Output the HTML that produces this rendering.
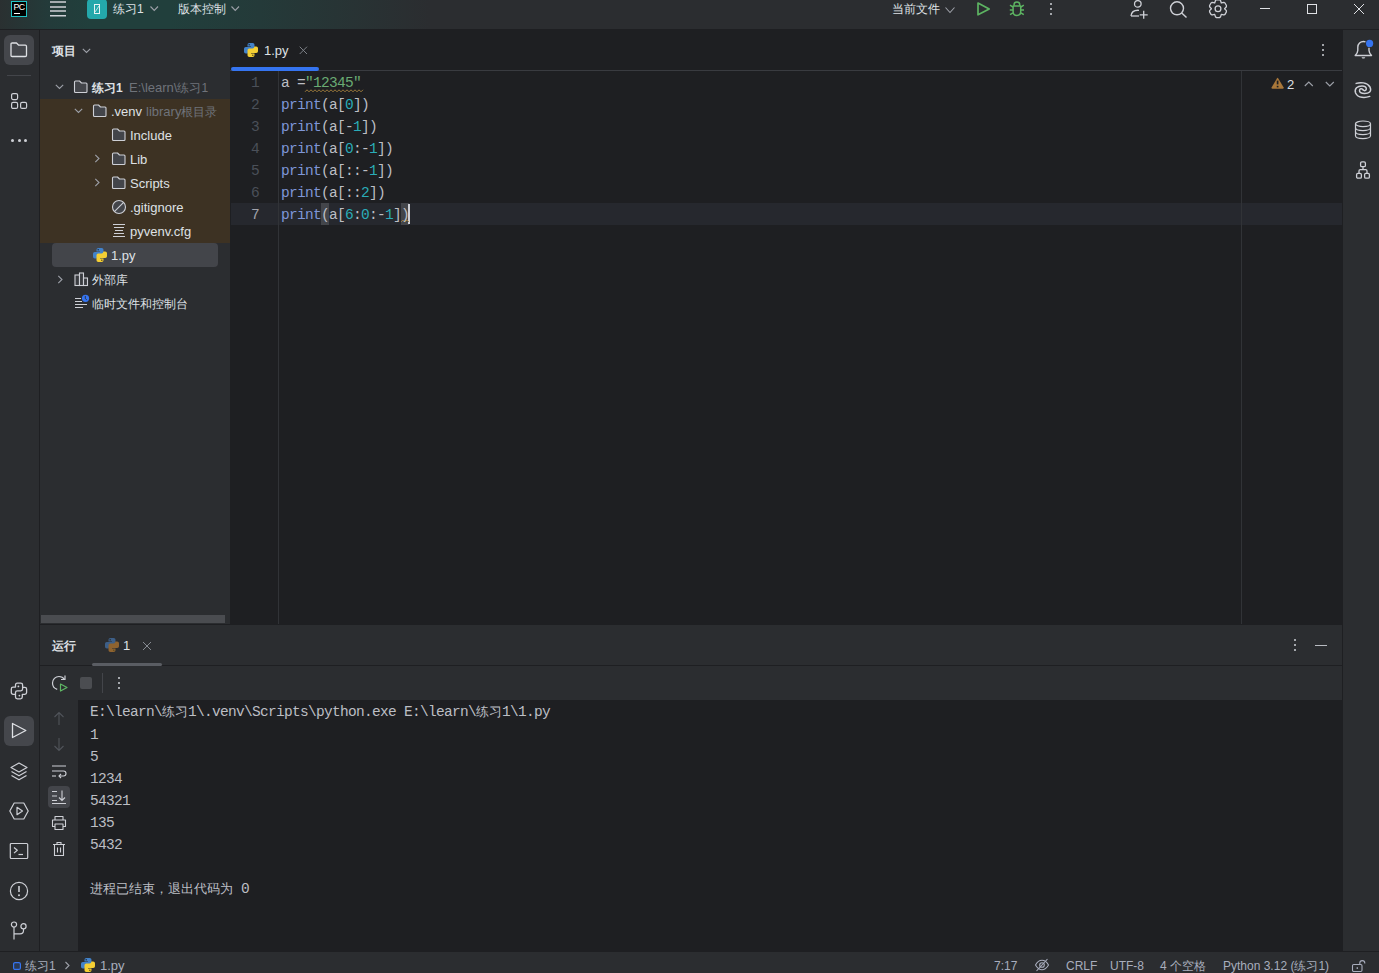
<!DOCTYPE html>
<html><head><meta charset="utf-8">
<style>
*{margin:0;padding:0;box-sizing:border-box}
html,body{width:1379px;height:973px;overflow:hidden;background:#2B2D30;font-family:"Liberation Sans",sans-serif;font-size:13px;color:#DFE1E5}
.a{position:absolute}
.t{position:absolute;white-space:nowrap;line-height:18px}
.m{font-family:"Liberation Mono",monospace;font-size:14.5px;letter-spacing:-0.7px;white-space:pre;line-height:22px}
svg{position:absolute;overflow:visible}
#title{left:0;top:0;width:1379px;height:29px;background:linear-gradient(to right,#2A3031 0px,#233B3A 50px,#213F3C 90px,#213F3C 170px,#243A39 260px,#2B2D30 430px)}
</style></head><body>
<!-- title bar -->
<div id="title" class="a"></div>
<div class="a" style="left:0;top:29px;width:1379px;height:1px;background:#1E1F22"></div>
<!-- title contents -->
<div class="a" style="left:11px;top:1px;width:16px;height:16px;background:#000;border:1px solid #21C3C6"></div>
<div class="t" style="left:13.5px;top:0.5px;font-size:8.8px;color:#fff;letter-spacing:-0.6px;line-height:12px">PC</div>
<div class="a" style="left:14px;top:13px;width:6px;height:1px;background:#fff"></div>
<svg style="left:50px;top:0" width="16" height="18"><path d="M0 2.1 H16 M0 6.9 H16 M0 11.1 H16 M0 15.7 H16" stroke="#CED0D6" stroke-width="1.5"/></svg>
<div class="a" style="left:87px;top:-1px;width:20px;height:20px;background:#24A8AB;border-radius:4px"></div>
<div class="a" style="left:94px;top:4px;width:6px;height:10px;border:1px solid #E6F4F4"></div>
<svg style="left:94px;top:4px" width="6" height="10"><path d="M5 2 L1 8" stroke="#E6F4F4" stroke-width="0.8"/></svg>
<div class="t" style="left:113px;top:0px;font-size:12px;color:#DFE1E5">练习1</div>
<svg style="left:150px;top:6px" width="9" height="6"><path d="M0.5 0.5 L4.25 4.5 L8 0.5" fill="none" stroke="#9DA0A8" stroke-width="1.1"/></svg>
<div class="t" style="left:178px;top:0px;font-size:12px;color:#DFE1E5">版本控制</div>
<svg style="left:231px;top:6px" width="9" height="6"><path d="M0.5 0.5 L4.25 4.5 L8 0.5" fill="none" stroke="#9DA0A8" stroke-width="1.1"/></svg>

<div class="t" style="left:892px;top:0px;font-size:12px;color:#DFE1E5">当前文件</div>
<svg style="left:945px;top:7px" width="10" height="7"><path d="M0.5 0.5 L5 5.5 L9.5 0.5" fill="none" stroke="#9DA0A8" stroke-width="1.1"/></svg>
<svg style="left:976px;top:2px" width="16" height="16"><path d="M2 1 L13.2 6.9 L2 12.8 Z" fill="none" stroke="#5DB462" stroke-width="1.7" stroke-linejoin="round"/></svg>
<svg style="left:1008px;top:0px" width="18" height="18"><g fill="none" stroke="#5DB462" stroke-width="1.5" stroke-linejoin="round"><path d="M6.1 5.8 V4.6 Q6.1 2.1 8.9 2.1 Q11.7 2.1 11.7 4.6 V5.8"/><path d="M5.1 6.1 H12.7 V11.5 Q12.7 15.4 8.9 15.4 Q5.1 15.4 5.1 11.5 Z"/><path d="M2 5.2 L5 7.1 M15.8 5.2 L12.8 7.1 M1.8 10 H5 M12.8 10 H16 M2 14.6 L5 12.8 M15.8 14.6 L12.8 12.8"/></g></svg>
<div class="a" style="left:1050px;top:3px;width:2px;height:2px;background:#CED0D6;border-radius:1px"></div>
<div class="a" style="left:1050px;top:8px;width:2px;height:2px;background:#CED0D6;border-radius:1px"></div>
<div class="a" style="left:1050px;top:13px;width:2px;height:2px;background:#CED0D6;border-radius:1px"></div>
<svg style="left:1130px;top:0" width="20" height="20"><g fill="none" stroke="#CED0D6" stroke-width="1.3"><circle cx="7.8" cy="3.9" r="3.3"/><path d="M1 16 C1.5 11.5 5 10 9 10.3"/><path d="M1 16 H9"/><path d="M13.7 10.8 V18.8 M9.7 14.8 H17.7"/></g></svg>
<svg style="left:1168px;top:0" width="20" height="20"><g fill="none" stroke="#CED0D6" stroke-width="1.4"><circle cx="9" cy="8.3" r="6.5"/><path d="M13.7 13 L18.5 17.6"/></g></svg>
<svg style="left:1208px;top:-1px" width="20" height="20"><g fill="none" stroke="#CED0D6" stroke-width="1.3" stroke-linejoin="round"><path d="M7.49 1.48 L8.59 0.81 L11.41 0.81 L12.51 1.48 L13.30 3.98 L15.87 3.41 L16.99 4.04 L18.40 6.47 L18.38 7.77 L16.60 9.70 L18.38 11.63 L18.40 12.93 L16.99 15.36 L15.87 15.99 L13.30 15.42 L12.51 17.92 L11.41 18.59 L8.59 18.59 L7.49 17.92 L6.70 15.42 L4.13 15.99 L3.01 15.36 L1.60 12.93 L1.62 11.63 L3.40 9.70 L1.62 7.77 L1.60 6.47 L3.01 4.04 L4.13 3.41 L6.70 3.98 Z"/><circle cx="10" cy="9.7" r="2.9"/></g></svg>
<div class="a" style="left:1260px;top:8px;width:10px;height:1px;background:#DFE1E5"></div>
<div class="a" style="left:1307px;top:4px;width:10px;height:10px;border:1px solid #DFE1E5"></div>
<svg style="left:1353px;top:3px" width="12" height="12"><path d="M1 1 L11 11 M11 1 L1 11" stroke="#DFE1E5" stroke-width="1"/></svg>


<!-- left stripe -->
<div class="a" style="left:0;top:30px;width:39px;height:921px;background:#2B2D30"></div>
<div class="a" style="left:39px;top:30px;width:1px;height:921px;background:#1E1F22"></div>

<!-- project panel -->
<div class="a" style="left:40px;top:30px;width:190px;height:595px;background:#2B2D30"></div>


<!-- project panel content -->
<div class="a" style="left:4px;top:35px;width:30px;height:30px;background:#45474C;border-radius:6px"></div>
<svg style="left:10px;top:42px" width="18" height="16"><path d="M1 2.2 Q1 1 2.2 1 H6.5 L8.7 3.2 H15.3 Q16.5 3.2 16.5 4.4 V13.3 Q16.5 14.5 15.3 14.5 H2.2 Q1 14.5 1 13.3 Z" fill="none" stroke="#DFE1E5" stroke-width="1.3" stroke-linejoin="round"/></svg>
<div class="a" style="left:7px;top:75px;width:24px;height:1px;background:#43454A"></div>
<div class="t" style="left:52px;top:42px;font-size:12px;font-weight:bold">项目</div>
<svg style="left:82px;top:48px" width="10" height="6"><path d="M0.8 0.8 L4.5 4.5 L8.2 0.8" fill="none" stroke="#9DA0A8" stroke-width="1.1"/></svg>
<div class="a" style="left:40px;top:99px;width:190px;height:144px;background:#3D3223"></div>
<div class="a" style="left:52px;top:243px;width:166px;height:24px;background:#43454A;border-radius:4px"></div>
<svg style="left:55px;top:84px" width="10" height="6"><path d="M0.8 0.8 L4.5 4.5 L8.2 0.8" fill="none" stroke="#9DA0A8" stroke-width="1.1"/></svg>
<svg style="left:73px;top:80px" width="16" height="14"><path d="M1.5 2 Q1.5 1 2.5 1 H6.5 L8.5 3 H13 Q14 3 14 4 V11.5 Q14 12.5 13 12.5 H2.5 Q1.5 12.5 1.5 11.5 Z" fill="#43454A" stroke="#CED0D6" stroke-width="1.1" stroke-linejoin="round"/></svg>
<div class="t" style="left:92px;top:79px;font-size:12px;font-weight:bold">练习1</div>
<div class="t" style="left:129px;top:79px;color:#6F737A">E:\learn\<span style="font-size:12px">练习1</span></div>
<svg style="left:74px;top:108px" width="10" height="6"><path d="M0.8 0.8 L4.5 4.5 L8.2 0.8" fill="none" stroke="#9DA0A8" stroke-width="1.1"/></svg>
<svg style="left:92px;top:104px" width="16" height="14"><path d="M1.5 2 Q1.5 1 2.5 1 H6.5 L8.5 3 H13 Q14 3 14 4 V11.5 Q14 12.5 13 12.5 H2.5 Q1.5 12.5 1.5 11.5 Z" fill="#43454A" stroke="#CED0D6" stroke-width="1.1" stroke-linejoin="round"/></svg>
<div class="t" style="left:111px;top:103px">.venv</div>
<div class="t" style="left:146px;top:103px;color:#6F737A">library<span style="font-size:12px">根目录</span></div>
<svg style="left:111px;top:128px" width="16" height="14"><path d="M1.5 2 Q1.5 1 2.5 1 H6.5 L8.5 3 H13 Q14 3 14 4 V11.5 Q14 12.5 13 12.5 H2.5 Q1.5 12.5 1.5 11.5 Z" fill="#43454A" stroke="#CED0D6" stroke-width="1.1" stroke-linejoin="round"/></svg>
<div class="t" style="left:130px;top:127px">Include</div>
<svg style="left:94px;top:154px" width="6" height="10"><path d="M1.3 0.8 L5 4.5 L1.3 8.2" fill="none" stroke="#9DA0A8" stroke-width="1.1"/></svg>
<svg style="left:111px;top:152px" width="16" height="14"><path d="M1.5 2 Q1.5 1 2.5 1 H6.5 L8.5 3 H13 Q14 3 14 4 V11.5 Q14 12.5 13 12.5 H2.5 Q1.5 12.5 1.5 11.5 Z" fill="#43454A" stroke="#CED0D6" stroke-width="1.1" stroke-linejoin="round"/></svg>
<div class="t" style="left:130px;top:151px">Lib</div>
<svg style="left:94px;top:178px" width="6" height="10"><path d="M1.3 0.8 L5 4.5 L1.3 8.2" fill="none" stroke="#9DA0A8" stroke-width="1.1"/></svg>
<svg style="left:111px;top:176px" width="16" height="14"><path d="M1.5 2 Q1.5 1 2.5 1 H6.5 L8.5 3 H13 Q14 3 14 4 V11.5 Q14 12.5 13 12.5 H2.5 Q1.5 12.5 1.5 11.5 Z" fill="#43454A" stroke="#CED0D6" stroke-width="1.1" stroke-linejoin="round"/></svg>
<div class="t" style="left:130px;top:175px">Scripts</div>
<svg style="left:111px;top:199px" width="16" height="16"><circle cx="8" cy="8" r="6.5" fill="#43454A" stroke="#CED0D6" stroke-width="1.1"/><path d="M12.6 3.4 L3.4 12.6" stroke="#CED0D6" stroke-width="1.1"/></svg>
<div class="t" style="left:130px;top:199px">.gitignore</div>
<svg style="left:112px;top:223px" width="14" height="14"><g stroke="#CED0D6" stroke-width="1.1"><path d="M1 1.5 H13 M2 4.5 H12 M3 7.5 H11 M2 10.5 H12 M1 13.5 H13"/></g></svg>
<div class="t" style="left:130px;top:223px">pyvenv.cfg</div>
<svg style="left:93px;top:248px" width="14" height="14" viewBox="0 0 14 14"><path d="M3.5 3.5 V1.8 Q3.5 0 5.3 0 H8.7 Q10.5 0 10.5 1.8 V6.7 Q10.5 8.5 8.7 8.5 H5.5 Q3.7 8.5 3.7 10.3 V10.5 H1.8 Q0 10.5 0 8.7 V5.8 Q0 4 1.8 4 H7 V3.5 Z" fill="#4282C9"/><path d="M10.5 10.5 V12.2 Q10.5 14 8.7 14 H5.3 Q3.5 14 3.5 12.2 V7.3 Q3.5 5.5 5.3 5.5 H8.5 Q10.3 5.5 10.3 3.7 V3.5 H12.2 Q14 3.5 14 5.3 V8.2 Q14 10 12.2 10 H7 V10.5 Z" fill="#F4CF34"/><circle cx="5.2" cy="1.7" r="0.75" fill="#1E2A3A"/><circle cx="8.8" cy="12.3" r="0.75" fill="#5A4A1A"/></svg>
<div class="t" style="left:111px;top:247px">1.py</div>
<svg style="left:57px;top:275px" width="6" height="10"><path d="M1.3 0.8 L5 4.5 L1.3 8.2" fill="none" stroke="#9DA0A8" stroke-width="1.1"/></svg>
<svg style="left:74px;top:272px" width="16" height="15"><g fill="#3A3C40" stroke="#CED0D6" stroke-width="1.1"><rect x="1" y="3" width="4.5" height="10.5"/><rect x="5.5" y="1" width="4" height="12.5"/><rect x="9.5" y="6" width="4" height="7.5"/></g></svg>
<div class="t" style="left:92px;top:271px;font-size:12px">外部库</div>
<svg style="left:74px;top:293px" width="16" height="16"><g stroke="#CED0D6" stroke-width="1.1"><path d="M1 5.5 H7 M1 8.5 H8 M1 11.5 H13 M1 14.5 H9"/></g><circle cx="11.5" cy="5.3" r="3.6" fill="#3574F0"/><path d="M11.3 3 V5.6 L12.8 6.8" stroke="#2B2D30" stroke-width="0.9" fill="none"/></svg>
<div class="t" style="left:92px;top:295px;font-size:12px">临时文件和控制台</div>
<div class="a" style="left:41px;top:615px;width:184px;height:8px;background:#4A4C50;"></div>

<!-- editor -->
<div class="a" style="left:230px;top:30px;width:1112px;height:595px;background:#1E1F22"></div>
<div class="a" style="left:230px;top:70px;width:1112px;height:1px;background:#393B40"></div>


<!-- editor content -->
<svg style="left:244px;top:43px" width="14" height="14" viewBox="0 0 14 14"><path d="M3.5 3.5 V1.8 Q3.5 0 5.3 0 H8.7 Q10.5 0 10.5 1.8 V6.7 Q10.5 8.5 8.7 8.5 H5.5 Q3.7 8.5 3.7 10.3 V10.5 H1.8 Q0 10.5 0 8.7 V5.8 Q0 4 1.8 4 H7 V3.5 Z" fill="#4282C9"/><path d="M10.5 10.5 V12.2 Q10.5 14 8.7 14 H5.3 Q3.5 14 3.5 12.2 V7.3 Q3.5 5.5 5.3 5.5 H8.5 Q10.3 5.5 10.3 3.7 V3.5 H12.2 Q14 3.5 14 5.3 V8.2 Q14 10 12.2 10 H7 V10.5 Z" fill="#F4CF34"/><circle cx="5.2" cy="1.7" r="0.75" fill="#1E2A3A"/><circle cx="8.8" cy="12.3" r="0.75" fill="#5A4A1A"/></svg>
<div class="t" style="left:264px;top:42px">1.py</div>
<svg style="left:299px;top:46px" width="9" height="9"><path d="M0.7 0.7 L8 8 M8 0.7 L0.7 8" stroke="#7D8188" stroke-width="1"/></svg>
<div class="a" style="left:231px;top:67px;width:88px;height:3.5px;background:#3574F0;border-radius:2px"></div>
<div class="a" style="left:1322px;top:44px;width:2px;height:2px;background:#CED0D6;border-radius:1px"></div>
<div class="a" style="left:1322px;top:49px;width:2px;height:2px;background:#CED0D6;border-radius:1px"></div>
<div class="a" style="left:1322px;top:54px;width:2px;height:2px;background:#CED0D6;border-radius:1px"></div>
<div class="a" style="left:231px;top:203px;width:1111px;height:22px;background:#26282E"></div>
<div class="a" style="left:278px;top:71px;width:1px;height:553px;background:#313337"></div>
<div class="a" style="left:1241px;top:71px;width:1px;height:553px;background:#313337"></div>
<div class="a" style="left:321px;top:203px;width:8px;height:22px;background:#43454A"></div>
<div class="a" style="left:401px;top:203px;width:8px;height:22px;background:#43454A"></div>
<div class="a" style="left:408px;top:204px;width:2px;height:20px;background:#CED0D6"></div>
<svg style="left:401px;top:219px" width="8" height="4"><path d="M0 3 L2 1 L4 3 L6 1 L8 3" fill="none" stroke="#9C7A3C" stroke-width="0.9"/></svg>
<div class="a m" style="left:231px;top:72px;width:28px;text-align:right;color:#4B5059">1
2
3
4
5
6
<span style="color:#A1A3AB">7</span></div>
<div class="a m" style="left:281px;top:72px;color:#BCBEC4"><span style="color:#BCBEC4">a =</span><span style="color:#6AAB73">"12345"</span>
<span style="color:#7F96D8">print</span>(a[<span style="color:#2AACB8">0</span>])
<span style="color:#7F96D8">print</span>(a[-<span style="color:#2AACB8">1</span>])
<span style="color:#7F96D8">print</span>(a[<span style="color:#2AACB8">0</span>:-<span style="color:#2AACB8">1</span>])
<span style="color:#7F96D8">print</span>(a[::-<span style="color:#2AACB8">1</span>])
<span style="color:#7F96D8">print</span>(a[::<span style="color:#2AACB8">2</span>])
<span style="color:#7F96D8">print</span>(a[<span style="color:#2AACB8">6</span>:<span style="color:#2AACB8">0</span>:-<span style="color:#2AACB8">1</span>])</div>
<svg style="left:305px;top:89px" width="58" height="4"><path d="M0 2.8 L2 0.8 L4 2.8 L6 0.8 L8 2.8 L10 0.8 L12 2.8 L14 0.8 L16 2.8 L18 0.8 L20 2.8 L22 0.8 L24 2.8 L26 0.8 L28 2.8 L30 0.8 L32 2.8 L34 0.8 L36 2.8 L38 0.8 L40 2.8 L42 0.8 L44 2.8 L46 0.8 L48 2.8 L50 0.8 L52 2.8 L54 0.8 L56 2.8 L58 0.8" fill="none" stroke="#9C7A3C" stroke-width="1"/></svg>
<svg style="left:1271px;top:77px" width="14" height="13"><path d="M5.9 1.4 Q6.6 0.3 7.3 1.4 L12.5 10.3 Q13.1 11.8 11.6 11.8 H1.6 Q0.1 11.8 0.7 10.3 Z" fill="#A8773A"/><path d="M6.6 3.6 V7.4" stroke="#1E1F22" stroke-width="1.7"/><rect x="5.75" y="8.8" width="1.7" height="1.6" fill="#1E1F22"/></svg>
<div class="t" style="left:1287px;top:76px;color:#DFE1E5">2</div>
<svg style="left:1304px;top:81px" width="10" height="6"><path d="M0.8 5 L4.8 1 L8.8 5" fill="none" stroke="#9DA0A8" stroke-width="1.1"/></svg>
<svg style="left:1325px;top:81px" width="10" height="6"><path d="M0.8 1 L4.8 5 L8.8 1" fill="none" stroke="#9DA0A8" stroke-width="1.1"/></svg>

<!-- right stripe -->
<div class="a" style="left:1342px;top:30px;width:1px;height:921px;background:#1E1F22"></div>
<div class="a" style="left:1343px;top:30px;width:36px;height:921px;background:#2B2D30"></div>

<!-- run tool window -->
<div class="a" style="left:40px;top:624px;width:1302px;height:1px;background:#1E1F22"></div>
<div class="a" style="left:40px;top:625px;width:1302px;height:40px;background:#2B2D30"></div>
<div class="a" style="left:40px;top:665px;width:1302px;height:1px;background:#1E1F22"></div>
<div class="a" style="left:40px;top:666px;width:1302px;height:34px;background:#2B2D30"></div>
<div class="a" style="left:78px;top:700px;width:1264px;height:251px;background:#1E1F22"></div>

<!-- status bar -->
<div class="a" style="left:0;top:951px;width:1379px;height:1px;background:#1E1F22"></div>
<div class="a" style="left:0;top:952px;width:1379px;height:21px;background:#2B2D30"></div>


<!-- left stripe icons -->
<svg style="left:10px;top:92px" width="18" height="18"><g fill="none" stroke="#CED0D6" stroke-width="1.2"><rect x="1.6" y="1.6" width="6" height="6" rx="1.5"/><rect x="1.6" y="10.4" width="6" height="6" rx="1.5"/><rect x="10.6" y="10.4" width="6" height="6" rx="1.5"/></g></svg>
<div class="a" style="left:11px;top:139px;width:3px;height:3px;background:#CED0D6;border-radius:50%"></div><div class="a" style="left:17.5px;top:139px;width:3px;height:3px;background:#CED0D6;border-radius:50%"></div><div class="a" style="left:24px;top:139px;width:3px;height:3px;background:#CED0D6;border-radius:50%"></div>
<svg style="left:10px;top:682px" width="18" height="18"><g fill="none" stroke="#CED0D6" stroke-width="1.3" stroke-linejoin="round"><path d="M5.5 5.1 V3 Q5.5 1.2 7.3 1.2 H10.8 Q12.6 1.2 12.6 3 V5.3 H14.8 Q16.6 5.3 16.6 7.1 V10.5 Q16.6 12.3 14.8 12.3 H12.3 V15.1 Q12.3 16.9 10.5 16.9 H7.3 Q5.5 16.9 5.5 15.1 V12.3 H3.1 Q1.3 12.3 1.3 10.5 V6.9 Q1.3 5.1 3.1 5.1 Z"/><path d="M12.6 5.3 V7 Q12.6 8.8 10.8 8.8 H7.3 Q5.5 8.8 5.5 10.6 V12.3"/></g><circle cx="8.4" cy="4.4" r="0.9" fill="#CED0D6"/><circle cx="9.4" cy="13.6" r="0.9" fill="#CED0D6"/></svg>
<div class="a" style="left:4px;top:716px;width:30px;height:30px;background:#45474C;border-radius:6px"></div>
<svg style="left:11px;top:722px" width="18" height="18"><path d="M1.5 1.5 L14.8 8.5 L1.5 15.5 Z" fill="none" stroke="#DFE1E5" stroke-width="1.3" stroke-linejoin="round"/></svg>
<svg style="left:10px;top:762px" width="18" height="19"><g fill="none" stroke="#CED0D6" stroke-width="1.2" stroke-linejoin="round"><path d="M9 1 L17 5.5 L9 10 L1 5.5 Z"/><path d="M1.5 9.5 L9 13.8 L16.5 9.5"/><path d="M1.5 13.5 L9 17.8 L16.5 13.5"/></g></svg>
<svg style="left:9px;top:802px" width="20" height="18"><g fill="none" stroke="#CED0D6" stroke-width="1.2" stroke-linejoin="round"><path d="M5.2 1 H14.8 L19.2 9 L14.8 17 H5.2 L0.8 9 Z"/><path d="M8 5.3 L13.5 9 L8 12.7 Z"/></g></svg>
<svg style="left:9px;top:842px" width="20" height="18"><g fill="none" stroke="#CED0D6" stroke-width="1.2"><rect x="1.3" y="1.5" width="17.4" height="15" rx="1"/><path d="M5 5.5 L8.3 8.3 L5 11.1" stroke-linejoin="round"/><path d="M9.5 12.5 H14"/></g></svg>
<svg style="left:9px;top:881px" width="20" height="20"><g fill="none" stroke="#CED0D6" stroke-width="1.2"><circle cx="10" cy="10" r="8.6"/><path d="M10 5 V11" stroke-width="1.6"/></g><circle cx="10" cy="14.2" r="1" fill="#CED0D6"/></svg>
<svg style="left:10px;top:921px" width="18" height="20"><g fill="none" stroke="#CED0D6" stroke-width="1.2"><circle cx="4" cy="3.6" r="2.6"/><circle cx="13.5" cy="5.3" r="2.6"/><path d="M4 6.2 V18.5"/><path d="M13.5 7.9 V9.5 C13.5 11.5 12.5 12.8 10 12.8 H4"/></g></svg>

<!-- right stripe icons -->
<svg style="left:1354px;top:40px" width="20" height="20"><g fill="none" stroke="#CED0D6" stroke-width="1.4" stroke-linejoin="round"><path d="M11.5 1.8 C10.9 1.6 10.2 1.5 9.5 1.5 C6.5 1.5 3.8 3.8 3.8 7.3 V10.5 C3.8 12.3 2.5 14 1.2 15.5 H17.5 C16.2 14 15 12.3 15 10.5 V7.8"/></g><path d="M7.5 17.2 H11.3 L10.4 18.6 H8.4 Z" fill="#CED0D6"/><circle cx="15.6" cy="3.4" r="3.6" fill="#3574F0"/></svg>
<svg style="left:1350px;top:78px" width="26" height="24"><g fill="none" stroke="#CED0D6" stroke-width="1.5" stroke-linecap="round"><path d="M6.2 5.4 C10 4.2 17 4 20 9 C22 13.5 19 15.5 14.5 15.5 C11 15.5 9.3 14 9.5 12.3 C9.7 10.7 11.5 10.2 13 11.5"/><path d="M19.75 18.4 C15.5 20 8 20.5 5.6 15 C4 10.5 7.5 8 12 8 C15 8 16.5 9.2 16.3 11 C16.1 12.6 14.5 13.2 13 12"/></g></svg>
<svg style="left:1354px;top:120px" width="18" height="20"><g fill="none" stroke="#CED0D6" stroke-width="1.2"><ellipse cx="9" cy="3.8" rx="7.5" ry="2.8"/><path d="M1.5 3.8 V15.8 C1.5 17.4 4.8 18.6 9 18.6 C13.2 18.6 16.5 17.4 16.5 15.8 V3.8"/><path d="M1.5 7.8 C1.5 9.4 4.8 10.6 9 10.6 C13.2 10.6 16.5 9.4 16.5 7.8"/><path d="M1.5 11.8 C1.5 13.4 4.8 14.6 9 14.6 C13.2 14.6 16.5 13.4 16.5 11.8"/></g></svg>
<svg style="left:1355px;top:160px" width="16" height="20"><g fill="none" stroke="#CED0D6" stroke-width="1.3"><rect x="5.6" y="1.9" width="4.8" height="4.8" rx="1.3"/><rect x="1.6" y="13.4" width="4.8" height="4.8" rx="1.3"/><rect x="9.6" y="13.4" width="4.8" height="4.8" rx="1.3"/><path d="M8 6.7 V9.7 M4 13.4 V10.9 Q4 9.7 5.2 9.7 H10.8 Q12 9.7 12 10.9 V13.4"/></g></svg>

<!-- run tool window content -->
<div class="t" style="left:52px;top:637px;font-size:12px;font-weight:bold">运行</div>
<svg style="left:105px;top:638px" width="14" height="14" viewBox="0 0 14 14"><path d="M3.5 3.5 V1.8 Q3.5 0 5.3 0 H8.7 Q10.5 0 10.5 1.8 V6.7 Q10.5 8.5 8.7 8.5 H5.5 Q3.7 8.5 3.7 10.3 V10.5 H1.8 Q0 10.5 0 8.7 V5.8 Q0 4 1.8 4 H7 V3.5 Z" fill="#3D5F88"/><path d="M10.5 10.5 V12.2 Q10.5 14 8.7 14 H5.3 Q3.5 14 3.5 12.2 V7.3 Q3.5 5.5 5.3 5.5 H8.5 Q10.3 5.5 10.3 3.7 V3.5 H12.2 Q14 3.5 14 5.3 V8.2 Q14 10 12.2 10 H7 V10.5 Z" fill="#8E6330"/><circle cx="5.2" cy="1.7" r="0.75" fill="#2B2D30"/><circle cx="8.8" cy="12.3" r="0.75" fill="#5A4A1A"/></svg>
<div class="t" style="left:123px;top:637px">1</div>
<svg style="left:142px;top:641px" width="10" height="10"><path d="M1 1 L9 9 M9 1 L1 9" stroke="#868A91" stroke-width="1"/></svg>
<div class="a" style="left:92px;top:663px;width:70px;height:3px;background:#5A5D63;border-radius:2px"></div>
<div class="a" style="left:1294px;top:639px;width:2px;height:2px;background:#CED0D6;border-radius:50%"></div><div class="a" style="left:1294px;top:644px;width:2px;height:2px;background:#CED0D6;border-radius:50%"></div><div class="a" style="left:1294px;top:649px;width:2px;height:2px;background:#CED0D6;border-radius:50%"></div>
<div class="a" style="left:1315px;top:645px;width:12px;height:1.3px;background:#B9BCC2"></div>
<svg style="left:51px;top:675px" width="18" height="18"><g fill="none" stroke="#CED0D6" stroke-width="1.2"><path d="M13.5 4.3 C12.3 2.5 10.3 1.5 8 1.5 C4.4 1.5 1.5 4.4 1.5 8 C1.5 11 3.5 13.5 6.2 14.3"/><path d="M14 0.5 V4.5 H10"/></g><path d="M9.5 9 L16 12.5 L9.5 16 Z" fill="none" stroke="#5FB865" stroke-width="1.2" stroke-linejoin="round"/></svg>
<div class="a" style="left:80px;top:677px;width:12px;height:12px;background:#4B4D51;border-radius:2px"></div>
<div class="a" style="left:102px;top:673px;width:1px;height:20px;background:#43454A"></div>
<div class="a" style="left:118px;top:677px;width:2px;height:2px;background:#CED0D6;border-radius:50%"></div><div class="a" style="left:118px;top:682px;width:2px;height:2px;background:#CED0D6;border-radius:50%"></div><div class="a" style="left:118px;top:687px;width:2px;height:2px;background:#CED0D6;border-radius:50%"></div>
<svg style="left:52px;top:711px" width="14" height="15"><g fill="none" stroke="#50545A" stroke-width="1.1"><path d="M7 14 V1.5 M2.5 6 L7 1.5 L11.5 6"/></g></svg>
<svg style="left:52px;top:737px" width="14" height="15"><g fill="none" stroke="#50545A" stroke-width="1.1"><path d="M7 1 V13.5 M2.5 9 L7 13.5 L11.5 9"/></g></svg>
<svg style="left:51px;top:764px" width="16" height="15"><g fill="none" stroke="#CED0D6" stroke-width="1.1"><path d="M1 2 H15 M1 7 H12.5 C14 7 15 8 15 9.5 C15 11 14 12 12.5 12 H8"/><path d="M10 10 L8 12 L10 14"/><path d="M1 12 H5"/></g></svg>
<div class="a" style="left:48px;top:786px;width:22px;height:22px;background:#43454A;border-radius:4px"></div>
<svg style="left:51px;top:789px" width="16" height="16"><g fill="none" stroke="#CED0D6" stroke-width="1.1"><path d="M1 2.5 H6 M1 7 H6 M1 11.5 H6 M1 14.5 H15"/><path d="M11 1.5 V11.5 M8 8.5 L11 11.5 L14 8.5"/></g></svg>
<svg style="left:51px;top:815px" width="16" height="16"><g fill="none" stroke="#CED0D6" stroke-width="1.1" stroke-linejoin="round"><path d="M4 5 V1.5 H12 V5"/><path d="M4 11.5 H1.5 V5 H14.5 V11.5 H12"/><path d="M4 9 H12 V14.5 H4 Z"/></g></svg>
<svg style="left:52px;top:841px" width="14" height="16"><g fill="none" stroke="#CED0D6" stroke-width="1.1"><path d="M1 3.5 H13 M5 3.5 V1.5 H9 V3.5"/><path d="M2.5 3.5 V14.5 H11.5 V3.5"/><path d="M5.5 6.5 V11.5 M8.5 6.5 V11.5"/></g></svg>
<div class="a m" style="left:90px;top:701px;color:#BCBEC4;line-height:22px">E:\learn\<span style="font-size:13px;letter-spacing:0">练习</span>1\.venv\Scripts\python.exe E:\learn\<span style="font-size:13px;letter-spacing:0">练习</span>1\1.py
1
5
1234
54321
135
5432

<span style="font-size:13px;letter-spacing:0">进程已结束，退出代码为</span> 0</div>

<!-- status bar content -->
<svg style="left:12px;top:961px" width="10" height="10"><rect x="1.6" y="1.6" width="6.8" height="6.8" rx="1.5" fill="#2B3A55" stroke="#3574F0" stroke-width="1.2"/></svg>
<div class="t" style="left:25px;top:957px;font-size:12px;color:#A8ADBD">练习1</div>
<svg style="left:64px;top:961px" width="7" height="10"><path d="M1.5 1 L5 4.5 L1.5 8" fill="none" stroke="#9DA0A8" stroke-width="1.1"/></svg>
<svg style="left:81px;top:958px" width="14" height="14" viewBox="0 0 14 14"><path d="M3.5 3.5 V1.8 Q3.5 0 5.3 0 H8.7 Q10.5 0 10.5 1.8 V6.7 Q10.5 8.5 8.7 8.5 H5.5 Q3.7 8.5 3.7 10.3 V10.5 H1.8 Q0 10.5 0 8.7 V5.8 Q0 4 1.8 4 H7 V3.5 Z" fill="#4282C9"/><path d="M10.5 10.5 V12.2 Q10.5 14 8.7 14 H5.3 Q3.5 14 3.5 12.2 V7.3 Q3.5 5.5 5.3 5.5 H8.5 Q10.3 5.5 10.3 3.7 V3.5 H12.2 Q14 3.5 14 5.3 V8.2 Q14 10 12.2 10 H7 V10.5 Z" fill="#F4CF34"/><circle cx="5.2" cy="1.7" r="0.75" fill="#1E2A3A"/><circle cx="8.8" cy="12.3" r="0.75" fill="#5A4A1A"/></svg>
<div class="t" style="left:100px;top:957px;color:#A8ADBD">1.py</div>
<div class="t" style="left:994px;top:957px;font-size:12px;color:#A8ADBD">7:17</div>
<svg style="left:1034px;top:957px" width="16" height="16"><g fill="none" stroke="#A8ADBD" stroke-width="1.1"><path d="M1.5 8 C3.5 4.5 5.5 3.3 8 3.3 C10.5 3.3 12.5 4.5 14.5 8 C12.5 11.5 10.5 12.7 8 12.7 C5.5 12.7 3.5 11.5 1.5 8 Z"/><circle cx="8" cy="8" r="2.3"/><path d="M2.5 14 L13.5 2"/></g></svg>
<div class="t" style="left:1066px;top:957px;font-size:12px;color:#A8ADBD">CRLF</div>
<div class="t" style="left:1110px;top:957px;font-size:12px;color:#A8ADBD">UTF-8</div>
<div class="t" style="left:1160px;top:957px;font-size:12px;color:#A8ADBD">4 个空格</div>
<div class="t" style="left:1223px;top:957px;font-size:12px;color:#A8ADBD">Python 3.12 (练习1)</div>
<svg style="left:1350px;top:958px" width="18" height="16"><g fill="none" stroke="#A8ADBD" stroke-width="1.1"><rect x="2.5" y="6.5" width="9.5" height="7" rx="1.2"/><path d="M9.8 6.5 V5 Q9.8 2.6 12.3 2.6 Q14.8 2.6 14.8 5 V5.6"/></g><rect x="6.6" y="9.3" width="1.4" height="1.6" fill="#A8ADBD"/></svg>

</body></html>
